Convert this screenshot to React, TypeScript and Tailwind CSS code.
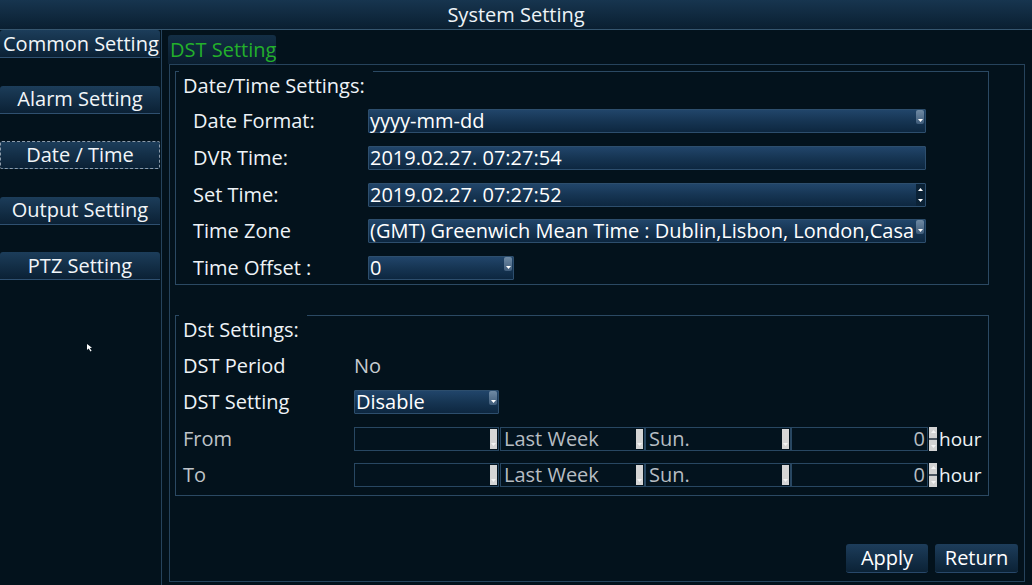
import React from 'react';

const lineColor = 'border-[#26435c]';

function DownTri({ color = '#ffffff' }: { color?: string }) {
  return (
    <svg width="5" height="3" viewBox="0 0 5 3">
      <path d="M0 0 L5 0 L2.5 3 Z" fill={color} />
    </svg>
  );
}

function UpTri({ color = '#ffffff' }: { color?: string }) {
  return (
    <svg width="5" height="3" viewBox="0 0 5 3">
      <path d="M0 3 L5 3 L2.5 0 Z" fill={color} />
    </svg>
  );
}

type FieldKind = 'drop' | 'spin' | 'none';

function Field({ w, value, kind }: { w: string; value: string; kind: FieldKind }) {
  return (
    <div
      className={`${w} h-[24px] flex items-center border border-[#2d4e6d] bg-linear-to-b from-[#21456a] via-[#163553] to-[#0d2740] rounded-[1px]`}
    >
      <span className="flex-1 min-w-0 pl-[1px] text-[20px] leading-[22px] text-white whitespace-nowrap">
        {value}
      </span>
      {kind === 'drop' && (
        <div className="shrink-0 self-start mr-[1px] w-[8px] h-[14px] rounded-[2px] bg-linear-to-b from-[#6f8aa4] to-[#3f5c7a] flex items-end justify-center pb-[2px]">
          <DownTri />
        </div>
      )}
      {kind === 'spin' && (
        <div className="shrink-0 w-[9px] h-full bg-[#0b2236] flex flex-col items-center justify-between py-[4px]">
          <UpTri />
          <DownTri />
        </div>
      )}
    </div>
  );
}

function DisField({ w, value, right }: { w: string; value: string; right?: boolean }) {
  return (
    <div className={`${w} h-[24px] flex items-center border border-[#284762] bg-[#03131e]`}>
      <span
        className={`flex-1 text-[20px] leading-[22px] text-[#b7bdc3] whitespace-nowrap ${
          right ? 'text-right pr-[2px]' : 'pl-[3px]'
        }`}
      >
        {value}
      </span>
      {!right && (
        <div className="mr-[1px] w-[7px] h-[20px] bg-[#d5d5d5] flex items-end justify-center pb-[3px]">
          <DownTri color="#f4f4f4" />
        </div>
      )}
    </div>
  );
}

function GreySpin() {
  return (
    <div className="w-[8px] h-[24px] bg-[#d3d3d3] flex flex-col items-center justify-between py-[3px] ml-[1px]">
      <UpTri color="#f4f4f4" />
      <div className="w-full h-[2px] bg-[#4b5560]" />
      <DownTri color="#f4f4f4" />
    </div>
  );
}

function Legend({ text }: { text: string }) {
  return (
    <div className="-mt-px ml-[3px] w-fit bg-[#03121c] pl-[4px] pr-[8px] pt-[1px] text-[20px] leading-[28px] text-[#eef3f7] whitespace-nowrap">
      {text}
    </div>
  );
}

function SideButton({ label, left, focus }: { label: string; left?: boolean; focus?: boolean }) {
  return (
    <div
      className={`w-[160px] h-[28px] flex items-center text-[20px] leading-[26px] whitespace-nowrap text-[#f2f6f9] bg-linear-to-b from-[#1c3d5a] to-[#0b2135] ${
        left ? 'justify-start pl-[3px]' : 'justify-center'
      } ${
        focus
          ? 'border border-dashed border-[#8d9cab] rounded-[2px]'
          : 'border-b border-[#2f5070] rounded-t-[3px]'
      }`}
    >
      {label}
    </div>
  );
}

export default function App() {
  const dtRows: { label: string; value: string; w: string; kind: FieldKind }[] = [
    { label: 'Date Format:', value: 'yyyy-mm-dd', w: 'w-[558px]', kind: 'drop' },
    { label: 'DVR Time:', value: '2019.02.27. 07:27:54', w: 'w-[558px]', kind: 'none' },
    { label: 'Set Time:', value: '2019.02.27. 07:27:52', w: 'w-[558px]', kind: 'spin' },
    {
      label: 'Time Zone',
      value: '(GMT) Greenwich Mean Time : Dublin,Lisbon, London,Casa',
      w: 'w-[558px]',
      kind: 'drop',
    },
    { label: 'Time Offset :', value: '0', w: 'w-[146px]', kind: 'drop' },
  ];

  return (
    <div className="w-[1032px] h-[585px] bg-[#03121c] text-[#eef3f7] font-['Open_Sans',sans-serif] flex flex-col overflow-hidden">
      <div className="h-[30px] shrink-0 bg-linear-to-b from-[#17354f] to-[#0a1f31] border-b border-[#36566f] flex items-center justify-center text-[20px] leading-[26px]">
        System Setting
      </div>

      <div className="flex flex-1 min-h-0">
        <aside className={`relative w-[162px] shrink-0 border-r ${lineColor} flex flex-col gap-[27.5px]`}>
          <SideButton label="Common Setting" left />
          <SideButton label="Alarm Setting" />
          <SideButton label="Date / Time" focus />
          <SideButton label="Output Setting" />
          <SideButton label="PTZ Setting" />
          <svg className="absolute left-[86px] top-[313px]" width="8" height="9" viewBox="0 0 8 9">
            <path d="M1 1 L1 7 L2.6 5.6 L4.5 8.5 L5.6 7.8 L3.8 5 L6 4.8 Z" fill="#ffffff" />
          </svg>
        </aside>

        <main className="flex-1 flex flex-col pl-[6px] pt-[5px] pb-[3px]">
          <div className="w-[108px] h-[29px] flex items-center pl-[2px] text-[20px] leading-[26px] whitespace-nowrap text-[#23b02b] bg-linear-to-b from-[#132e45] to-[#0a1e2f] rounded-t-[3px]">
            DST Setting
          </div>
          <div className={`ml-[1px] w-[856px] flex-1 border ${lineColor} flex flex-col`}>
            <section className="ml-[5px] mt-[6px] w-[814px] h-[214px] border border-[#2b4963]">
              <Legend text="Date/Time Settings:" />
              <div className="mt-[9px] pl-[17px] flex flex-col gap-[12.75px]">
                {dtRows.map((r) => (
                  <div key={r.label} className="h-[24px] flex items-center">
                    <span className="w-[175px] text-[20px] leading-[24px] whitespace-nowrap">{r.label}</span>
                    <Field w={r.w} value={r.value} kind={r.kind} />
                  </div>
                ))}
              </div>
            </section>

            <section className="ml-[5px] mt-[30px] w-[814px] h-[181px] border border-[#2b4963]">
              <Legend text="Dst Settings:" />
              <div className="mt-[10px] pl-[7px] flex flex-col gap-[12.3px]">
                <div className="h-[24px] flex items-center">
                  <span className="w-[171px] text-[20px] leading-[24px] whitespace-nowrap">DST Period</span>
                  <span className="text-[20px] leading-[24px] text-[#c6cbd0]">No</span>
                </div>
                <div className="h-[24px] flex items-center">
                  <span className="w-[171px] text-[20px] leading-[24px] whitespace-nowrap">DST Setting</span>
                  <Field w="w-[145px]" value="Disable" kind="drop" />
                </div>
                {['From', 'To'].map((l) => (
                  <div key={l} className="h-[24px] flex items-center">
                    <span className="w-[171px] text-[20px] leading-[24px] text-[#bfc4c9]">{l}</span>
                    <DisField w="w-[145px]" value="" />
                    <DisField w="w-[145px] ml-[1px]" value="Last Week" />
                    <DisField w="w-[146px]" value="Sun." />
                    <DisField w="w-[137px]" value="0" right />
                    <GreySpin />
                    <span className="ml-[2px] text-[19px] leading-[24px]">hour</span>
                  </div>
                ))}
              </div>
            </section>

            <div className="mt-auto mb-[8px] pr-[6px] flex justify-end gap-[7px]">
              <button className="w-[82px] h-[29px] rounded-[3px] bg-linear-to-b from-[#1d3d5b] to-[#0b2236] border-b border-[#28486a] text-[20px] leading-[26px] text-white">
                Apply
              </button>
              <button className="w-[83px] h-[29px] rounded-[3px] bg-linear-to-b from-[#1d3d5b] to-[#0b2236] border-b border-[#28486a] text-[20px] leading-[26px] text-white">
                Return
              </button>
            </div>
          </div>
        </main>
      </div>
    </div>
  );
}
